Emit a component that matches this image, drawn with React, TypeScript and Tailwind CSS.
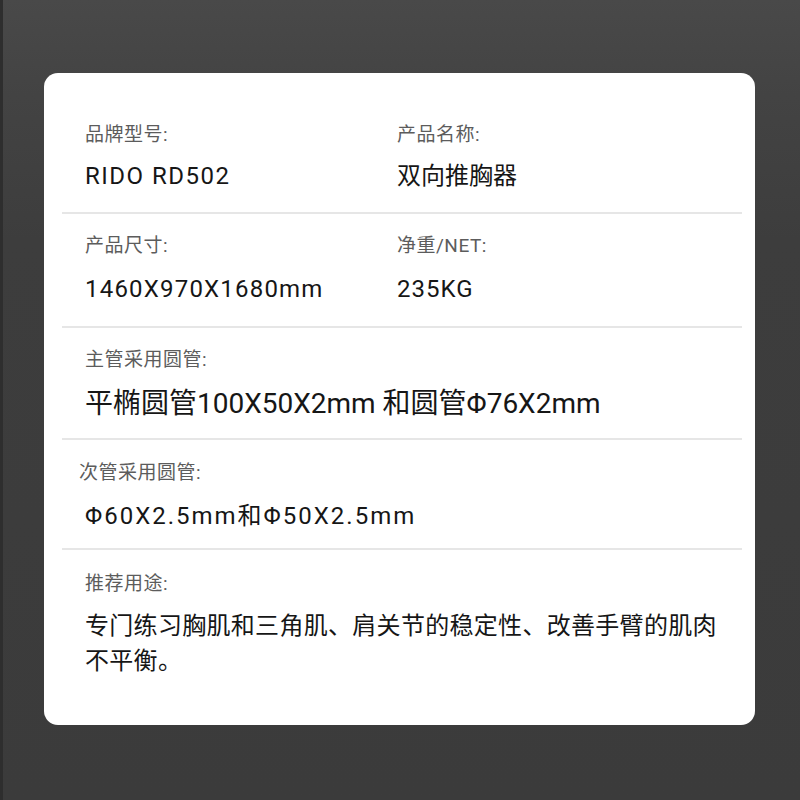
const font = "font-['Roboto','Noto_Sans_CJK_SC',sans-serif]";

function Label({ children, className = "" }: { children: React.ReactNode; className?: string }) {
  return <div className={`text-[19px] leading-[24px] tracking-[0.5px] text-[#5c5c5c] ${className}`}>{children}</div>;
}

function Value({ children, className = "" }: { children: React.ReactNode; className?: string }) {
  return <div className={`text-[24px] leading-[32px] text-[#161616] ${className}`}>{children}</div>;
}

function Divider() {
  return <div className="h-[2px] bg-[#e6e6e6]" />;
}

export default function App() {
  return (
    <main className={`min-h-[800px] w-full border-l-[3px] border-[#2e2e2e] bg-[linear-gradient(180deg,#494949_0%,#434343_12%,#3d3d3d_30%,#3b3b3b_100%)] pl-[41px] pt-[73px] pb-[75px] ${font}`}>
      <div className="h-[652px] w-[711px] rounded-[14px] bg-white pl-[18px] pr-[13px]">
        <div className="grid grid-cols-[335px_1fr] pt-[50px] pb-[20px]">
          <div className="pl-[23px]">
            <Label>品牌型号:</Label>
            <Value className="mt-[13px] tracking-[1.5px]">RIDO RD502</Value>
          </div>
          <div>
            <Label>产品名称:</Label>
            <Value className="mt-[13px]">双向推胸器</Value>
          </div>
        </div>
        <Divider />
        <div className="grid grid-cols-[335px_1fr] pt-[20px] pb-[21px]">
          <div className="pl-[23px]">
            <Label>产品尺寸:</Label>
            <Value className="mt-[15px] tracking-[1.2px]">1460X970X1680mm</Value>
          </div>
          <div>
            <Label>净重/NET:</Label>
            <Value className="mt-[15px] tracking-[1px]">235KG</Value>
          </div>
        </div>
        <Divider />
        <div className="pl-[23px] pt-[20px] pb-[16px]">
          <Label>主管采用圆管:</Label>
          <div className="mt-[14px] text-[28px] leading-[36px] text-[#161616]">平椭圆管100X50X2mm 和圆管Φ76X2mm</div>
        </div>
        <Divider />
        <div className="pl-[23px] pt-[21px] pb-[16px]">
          <Label className="-ml-[6px]">次管采用圆管:</Label>
          <Value className="mt-[15px] tracking-[2px]">Φ60X2.5mm和Φ50X2.5mm</Value>
        </div>
        <Divider />
        <div className="pl-[23px] pt-[22px]">
          <Label>推荐用途:</Label>
          <div className="mt-[13px] w-[640px] text-[24px] leading-[35px] tracking-[0.3px] text-[#161616]">
            专门练习胸肌和三角肌、肩关节的稳定性、改善手臂的肌肉不平衡。
          </div>
        </div>
      </div>
    </main>
  );
}
